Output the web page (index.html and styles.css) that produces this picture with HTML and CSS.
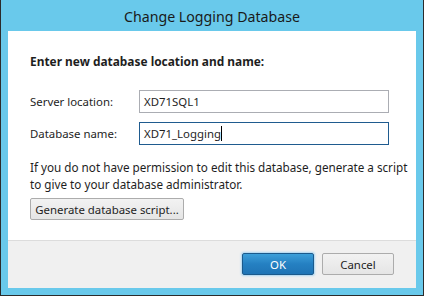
FILE: index.html
```html
<!DOCTYPE html>
<html>
<head>
<meta charset="utf-8">
<link rel="stylesheet" href="styles.css">
</head>
<body>
<div class="window">
  <div class="titlebar">Change Logging Database</div>
  <div class="panel">
    <div class="body">
      <div class="heading">Enter new database location and name:</div>
      <div class="row first">
        <span class="label">Server location:</span>
        <div class="input">XD71SQL1</div>
      </div>
      <div class="row">
        <span class="label">Database name:</span>
        <div class="input focus">XD71_Logging<span class="caret"></span></div>
      </div>
      <p class="note">If you do not have permission to edit this database, generate a script<br>to give to your database administrator.</p>
      <button class="btn gen">Generate database script...</button>
    </div>
    <div class="footer">
      <button class="btn ok">OK</button>
      <button class="btn cancel">Cancel</button>
    </div>
  </div>
</div>
</body>
</html>
```
FILE: styles.css
```css
html, body { margin: 0; padding: 0; }
body {
  width: 424px; height: 296px; overflow: hidden;
  font-family: "Segoe UI", "Noto Sans", "Open Sans", sans-serif;
  font-size: 11.4px; color: #1e1e1e;
}
.window {
  width: 424px; height: 296px; box-sizing: border-box;
  background: #69c9eb;
  border: 1px solid #2b2b2b; border-top: none;
  display: flex; flex-direction: column;
  padding: 0 7px 7px 7px;
}
.titlebar {
  height: 31px; line-height: 33px; text-align: center;
  font-size: 14.2px; color: #1a1a1a;
}
.panel { flex: 1; display: flex; flex-direction: column; background: #fff; }
.body { height: 210px; box-sizing: border-box; padding: 22px 0 0 22px; border-bottom: 1px solid #dcdcdc; }
.heading { font-weight: bold; font-size: 11.9px; line-height: 16px; color: #1e1e1e; }
.row { display: flex; align-items: center; height: 23px; }
.row.first { margin-top: 21px; }
.row + .row { margin-top: 9px; }
.label { width: 109px; }
.input {
  width: 250px; height: 23px; box-sizing: border-box;
  border: 1px solid #abadb3; padding: 0 4px; line-height: 21px;
  display: flex; align-items: center;
}
.input.focus { border-color: #1f5b8f; }
.caret { display: inline-block; width: 1px; height: 15px; background: #000; }
.note { margin: 14px 0 0 0; line-height: 17px; white-space: nowrap; font-size: 11.7px; }
.btn {
  font-family: inherit; font-size: 11.4px; height: 22px; box-sizing: border-box;
  border-radius: 2px; padding: 0; cursor: default;
}
.gen {
  margin-top: 5px; width: 154px;
  border: 1px solid #acacac; color: #1e1e1e;
  background: linear-gradient(#f2f2f2, #e5e5e5);
}
.footer {
  flex: 1; background: #f0f0f0;
  display: flex; justify-content: flex-end; align-items: flex-start;
  padding: 12px 22px 0 0; gap: 8px;
}
.ok {
  width: 72px; color: #fff; border: 1px solid #1b5a8c;
  background: linear-gradient(#3c9fd9, #2580c2 50%, #1f74b5);
  box-shadow: 0 0 2px 1px #a9d6f2;
}
.cancel {
  width: 72px; color: #1e1e1e; border: 1px solid #acacac;
  background: linear-gradient(#f2f2f2, #e5e5e5);
}
```
